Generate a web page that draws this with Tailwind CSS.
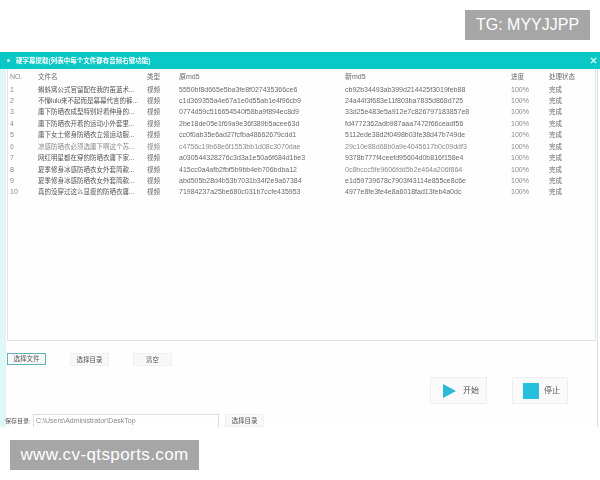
<!DOCTYPE html>
<html lang="zh">
<head>
<meta charset="utf-8">
<script src="https://cdn.jsdelivr.net/npm/@tailwindcss/browser@4"></script>
</head>
<body class="relative w-[600px] h-[480px] overflow-hidden bg-white font-['Liberation_Sans','Noto_Sans_CJK_SC',sans-serif]">
<div class="pt-[52px]">
  <div class="h-[375px] overflow-hidden flex flex-col blur-[0.5px]">
    <div class="h-[17px] shrink-0 flex items-center justify-between bg-[#0ac8c6] pl-[7px] pr-[3px] text-white">
      <div class="flex items-center gap-[3px]">
        <span class="w-[3px] h-[3px] bg-[#d8f8f8] rounded-full"></span>
        <span class="ml-[3px] text-[6.5px] font-bold">硬字幕提取(列表中每个文件都有音频右键功能)</span>
      </div>
      <svg class="w-[7px] h-[7px]" viewBox="0 0 8 8"><path d="M1 1l6 6M7 1l-6 6" stroke="#d8fafa" stroke-width="1.6"/></svg>
    </div>
    <div class="flex-1 min-h-0 flex flex-col bg-[#fefefe] border-l-[6px] border-r border-l-[#e0f7f7] border-r-[#cfe3ea] mr-[2px]">
      <div class="h-[272px] shrink-0 ml-[1px] mr-[1px] border-l border-b border-r border-[#e2e4e4] text-[7px] text-[#6a6a6a] pl-[2px]">
        <div class="grid grid-cols-[28px_109px_32px_166px_166px_38px_1fr] grid-rows-[13.5px] auto-rows-[11.45px] pt-[1px] leading-[11px] whitespace-nowrap">
          <div class="text-[#8a8a8a] pt-[1px]">NO.</div><div class="pt-[1px] text-[6.5px]">文件名</div><div class="pt-[1px] text-[6.5px]">类型</div><div class="pt-[1px]">原md5</div><div class="pt-[1px]">新md5</div><div class="pt-[1px] text-[6.5px]">进度</div><div class="pt-[1px] text-[6.5px]">处理状态</div>

          <div class="text-[#8a8a8a]">1</div><div class="text-[6.5px] text-[#555]">蝌蚪窝公式官留配在我的笛蓝术...</div><div class="text-[6.5px]">视频</div><div>5550bf8d665e5ba3fe8f027435366ce6</div><div>cb92b34493ab399d214425f3019feb88</div><div class="text-[#8a8a8a]">100%</div><div class="text-[6.5px]">完成</div>
          <div class="text-[#8a8a8a]">2</div><div class="text-[6.5px] text-[#555]">不懂lulu来不起而是幕幕代言的裤...</div><div class="text-[6.5px]">视频</div><div>c1d369355a4e67a1e0d55ab1e4f96cb9</div><div>24a44f3f683e11f803ba7835d868d725</div><div class="text-[#8a8a8a]">100%</div><div class="text-[6.5px]">完成</div>
          <div class="text-[#8a8a8a]">3</div><div class="text-[6.5px] text-[#555]">庸下防晒衣成型特别好看伸身的...</div><div class="text-[6.5px]">视频</div><div>0774d59c516654540f58ba9f894ec8d9</div><div>33d25e483e5a912e7c826797183857e8</div><div class="text-[#8a8a8a]">100%</div><div class="text-[6.5px]">完成</div>
          <div class="text-[#8a8a8a]">4</div><div class="text-[6.5px] text-[#555]">庸下防晒衣开着的运动小外套里...</div><div class="text-[6.5px]">视频</div><div>2be18de05e1f69a9e36f389b5acee63d</div><div>fd4772362adb987aaa7472f66ceadf56</div><div class="text-[#8a8a8a]">100%</div><div class="text-[6.5px]">完成</div>
          <div class="text-[#8a8a8a]">5</div><div class="text-[6.5px] text-[#555]">庸下女士修身防晒衣立领运动服...</div><div class="text-[6.5px]">视频</div><div>cc0f0ab35e6ad27fcfba48662679cdd1</div><div>5112ede38d2f0498b03fe38d47b749de</div><div class="text-[#8a8a8a]">100%</div><div class="text-[6.5px]">完成</div>
          <div class="text-[#9a9a9a]">6</div><div class="text-[6.5px] text-[#8a8a8a]">凉感防晒衣必须选庸下啊这个苏...</div><div class="text-[6.5px] text-[#8a8a8a]">视频</div><div class="text-[#8a8a8a]">c4756c19b68e6f1553bb1d08c3070dae</div><div class="text-[#8a8a8a]">29c10e88d68b0a9e4045617b0c09ddf3</div><div class="text-[#8a8a8a]">100%</div><div class="text-[6.5px]">完成</div>
          <div class="text-[#8a8a8a]">7</div><div class="text-[6.5px] text-[#555]">网红明星都在穿的防晒衣庸下家...</div><div class="text-[6.5px]">视频</div><div>a030544328276c3d3a1e50a6f684d1be3</div><div>9378b777f4ceefd95604d0b816f158e4</div><div class="text-[#8a8a8a]">100%</div><div class="text-[6.5px]">完成</div>
          <div class="text-[#8a8a8a]">8</div><div class="text-[6.5px] text-[#555]">夏季修身冰感防晒衣女外套简款...</div><div class="text-[6.5px]">视频</div><div>415cc0a4afb2fbf5b9bb4eb706bdba12</div><div class="text-[#8a8a8a]">0c8bccc5fe9606fdd5b2e464a206f864</div><div class="text-[#8a8a8a]">100%</div><div class="text-[6.5px]">完成</div>
          <div class="text-[#8a8a8a]">9</div><div class="text-[6.5px] text-[#555]">夏季修身冰感防晒衣女外套简款...</div><div class="text-[6.5px]">视频</div><div>abd505b28d4b53b7031b34f2e9a67384</div><div>e1d59739678c7903f43114e855ce8c6e</div><div class="text-[#8a8a8a]">100%</div><div class="text-[6.5px]">完成</div>
          <div class="text-[#8a8a8a]">10</div><div class="text-[6.5px] text-[#555]">真的没穿过这么显瘦的防晒衣庸...</div><div class="text-[6.5px]">视频</div><div>71984237a25be680c031b7ccfe435953</div><div>4977e8fe3fe4e8a6018fad13feb4a0dc</div><div class="text-[#8a8a8a]">100%</div><div class="text-[6.5px]">完成</div>
        </div>
      </div>
      <div class="flex mt-[12px] ml-[1px] gap-[24px] text-[6.5px] text-[#555]">
        <div class="w-[39px] h-[12px] flex items-center justify-center border border-[#5fb3b8] bg-[#f8f8f8]">选择文件</div>
        <div class="w-[39px] h-[13px] flex items-center justify-center border border-[#f0f0f0] bg-[#f8f8f8]">选择目录</div>
        <div class="w-[39px] h-[13px] flex items-center justify-center border border-[#f0f0f0] bg-[#f8f8f8]">清空</div>
      </div>
      <div class="flex justify-end mt-[11px] mr-[29px] gap-[25px] text-[8px] text-[#555]">
        <div class="w-[57px] h-[27px] flex items-center gap-[7px] pl-[11px] border border-[#eeeeee] bg-[#fafafa]">
          <svg class="w-[14px] h-[16px] shrink-0" viewBox="0 0 14 16"><path d="M1 1L14 8L1 15Z" fill="#2cb9d6"/></svg>
          <span>开始</span>
        </div>
        <div class="w-[56px] h-[27px] flex items-center gap-[5px] pl-[10px] border border-[#eeeeee] bg-[#fafafa]">
          <div class="w-[16px] h-[16px] shrink-0 bg-[#26c0de]"></div>
          <span>停止</span>
        </div>
      </div>
      <div class="flex items-start mt-[10px] -ml-[1px] text-[6px] text-[#555]">
        <span class="w-[28px] shrink-0 pt-[2px] leading-[10px] whitespace-nowrap">保存目录:</span>
        <div class="w-[186px] h-[16px] shrink-0 border border-[#dddddd] border-b-0 pl-[2px] pt-[1px] text-[7px] text-[#8a8a8a] leading-[10px]">C:\Users\Administrator\DeskTop</div>
        <div class="w-[39px] h-[13px] shrink-0 ml-[6px] flex items-center justify-center border border-[#f0f0f0] bg-[#f8f8f8] text-[6.5px]">选择目录</div>
      </div>
    </div>
  </div>
</div>
<div class="absolute left-[465px] top-[10px] w-[125px] h-[30px] flex items-center justify-center bg-[#a6a6a6] text-white text-[16px]">TG: MYYJJPP</div>
<div class="absolute left-[10px] top-[440px] w-[189px] h-[30px] flex items-center justify-center bg-[#a6a6a6] text-white text-[17px] tracking-[0.4px]">www.cv-qtsports.com</div>
</body>
</html>
